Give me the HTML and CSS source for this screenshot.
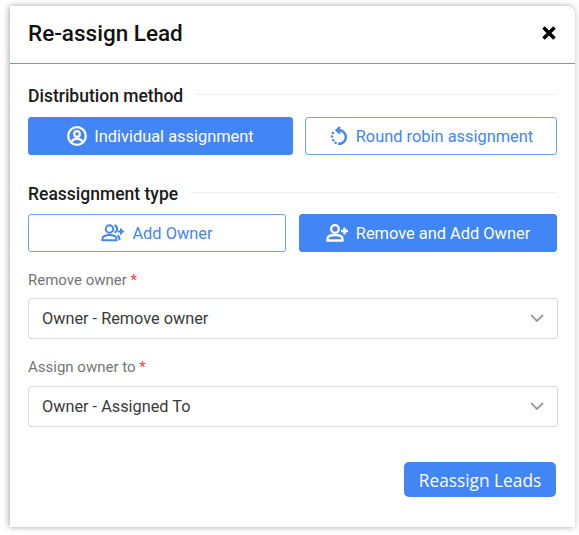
FILE: index.html
```html
<!DOCTYPE html>
<html lang="en">
<head>
    <meta charset="UTF-8">
    <title>Re-assign Lead</title>
    <link rel="stylesheet" href="styles.css">
</head>
<body>
    <div class="modal">
        <div class="modal-header">
            <h1>Re-assign Lead</h1>
            <button class="close-button" aria-label="Close">
                <svg width="16" height="16" viewBox="0 0 16 16"><path d="M2.500 2.500l11 11M13.500 2.500l-11 11" stroke="#000" stroke-width="3.600" fill="none"/></svg>
            </button>
        </div>
        <div class="modal-body">
            <div class="section-title"><span>Distribution method</span><i></i></div>
            <div class="button-row row-method">
                <button class="choice active">
                    <svg width="20" height="20" viewBox="0 0 20 20" fill="none" stroke="#fff"><circle cx="10" cy="10" r="8.800" stroke-width="2.300"/><circle cx="10" cy="8" r="2.800" stroke-width="2.200"/><path d="M4.800 15.400c1-2 3-2.600 5.200-2.600s4.200.6 5.200 2.600" stroke-width="2.200"/></svg>
                    Individual assignment
                </button>
                <button class="choice">
                    <svg width="20" height="20" viewBox="0 0 20 20" fill="none" stroke="#4285f4"><path d="M9.500 4.200a6.800 6.800 0 1 1-.5 13.500" stroke-width="2.400"/><path d="M11 1L7.500 4.200 11 7.400" stroke-width="2.200"/><path d="M3 10.500v.01M3.900 7v.01M4.300 14.300v.01M6.600 16.800v.01" stroke-width="2.600" stroke-linecap="round"/></svg>
                    Round robin assignment
                </button>
            </div>

            <div class="section-title second"><span>Reassignment type</span><i></i></div>
            <div class="button-row row-type">
                <button class="choice">
                    <svg width="24" height="20" viewBox="0 0 24 20" fill="none" stroke="#4285f4" stroke-width="2"><circle cx="8.500" cy="6" r="3.700"/><path d="M1.500 17.200v-1.500c0-2.300 3-3.700 7-3.700s7 1.400 7 3.700v1.500z"/><path d="M13.500 2.300a3.800 3.800 0 0 1 0 7.200M16.500 12.500c1.300.7 2 1.800 2 3.200v1.500"/><path d="M20 5.500v6M17 8.500h6" stroke-width="2.200"/></svg>
                    Add Owner
                </button>
                <button class="choice active">
                    <svg width="23" height="20" viewBox="0 0 23 20" fill="none" stroke="#fff" stroke-width="2.300"><circle cx="9" cy="6" r="3.800"/><path d="M1.500 17.500v-1.700c0-2.400 3.300-3.800 7.500-3.800s7.500 1.400 7.500 3.800v1.700z"/><path d="M18.500 4.500v7M15 8h7"/></svg>
                    Remove and Add Owner
                </button>
            </div>

            <label class="field-label">Remove owner <em>*</em></label>
            <div class="select-box">
                <span>Owner - Remove owner</span>
                <svg width="14" height="9" viewBox="0 0 14 9" fill="none" stroke="#9a9a9a" stroke-width="1.800"><path d="M1 1l6 6 6-6"/></svg>
            </div>

            <label class="field-label">Assign owner to <em>*</em></label>
            <div class="select-box">
                <span>Owner - Assigned To</span>
                <svg width="14" height="9" viewBox="0 0 14 9" fill="none" stroke="#9a9a9a" stroke-width="1.800"><path d="M1 1l6 6 6-6"/></svg>
            </div>

            <div class="modal-footer">
                <button class="submit-button">Reassign Leads</button>
            </div>
        </div>
    </div>
</body>
</html>
```

FILE: styles.css
```css
:root {
    --primary-color: #4285f4;
    --border-color: #d9d9d9;
    --text-color: #212121;
}

html, body {
    height: 100%;
}

body {
    margin: 0;
    padding: 6px 4px 0 10px;
    box-sizing: border-box;
    background-color: #fff;
    font-family: Roboto, Arial, sans-serif;
    color: var(--text-color);
    overflow: hidden;
}

button {
    font-family: inherit;
    cursor: pointer;
}

.modal {
    width: 565px;
    height: 521px;
    background-color: #fff;
    border-radius: 0 8px 0 0;
    box-shadow: -1px 0 6px rgba(0, 0, 0, 0.35);
}

.modal-header {
    box-sizing: border-box;
    height: 58px;
    display: flex;
    align-items: center;
    justify-content: space-between;
    padding: 0 18px 3px;
    border-bottom: 1px solid #6a98e6;
}

.modal-header h1 {
    margin: 0;
    font-size: 22.500px;
    font-weight: 500;
    color: #111;
}

.close-button {
    display: flex;
    padding: 0;
    border: none;
    background: none;
}

.modal-body {
    padding: 22px 18px 0;
}

.section-title {
    display: flex;
    align-items: center;
    gap: 13px;
    height: 20px;
    font-size: 17.500px;
    font-weight: 500;
    color: #1a1a1a;
}

.section-title i {
    flex: 1;
    height: 1px;
    margin-top: -3px;
    background-color: #eee;
}

.section-title.second {
    margin-top: 29px;
}

.button-row {
    display: grid;
    height: 38px;
    margin-top: 11px;
}

.row-method {
    grid-template-columns: 265px 252px;
    column-gap: 12px;
}

.row-type {
    grid-template-columns: 258px 258px;
    column-gap: 13px;
    margin-top: 10px;
}

.choice {
    display: flex;
    align-items: center;
    justify-content: center;
    gap: 7px;
    padding: 0;
    font-size: 16.400px;
    color: var(--primary-color);
    background-color: #fff;
    border: 1px solid #6f9ff5;
    border-radius: 3px;
}

.choice.active {
    color: #fff;
    background-color: var(--primary-color);
    border-color: var(--primary-color);
}

.field-label {
    display: block;
    height: 18px;
    margin-top: 19px;
    font-size: 15px;
    line-height: 18px;
    color: #757575;
}

.field-label em {
    font-style: normal;
    color: #f44336;
}

.select-box {
    display: flex;
    align-items: center;
    justify-content: space-between;
    box-sizing: border-box;
    width: 530px;
    height: 41px;
    margin-top: 9px;
    padding: 0 13px;
    font-size: 16.300px;
    color: #3a3a3a;
    border: 1px solid var(--border-color);
    border-radius: 3px;
}

.select-box + .field-label {
    margin-top: 19px;
}

.select-box + .field-label + .select-box {
    margin-top: 10px;
}

.modal-footer {
    display: flex;
    justify-content: flex-end;
    width: 528px;
    margin-top: 35px;
}

.submit-button {
    width: 152px;
    height: 35px;
    padding: 2px 0 0;
    font-family: "Open Sans", Arial, sans-serif;
    font-size: 17.300px;
    color: #fff;
    background-color: var(--primary-color);
    border: none;
    border-radius: 5px;
}
```
